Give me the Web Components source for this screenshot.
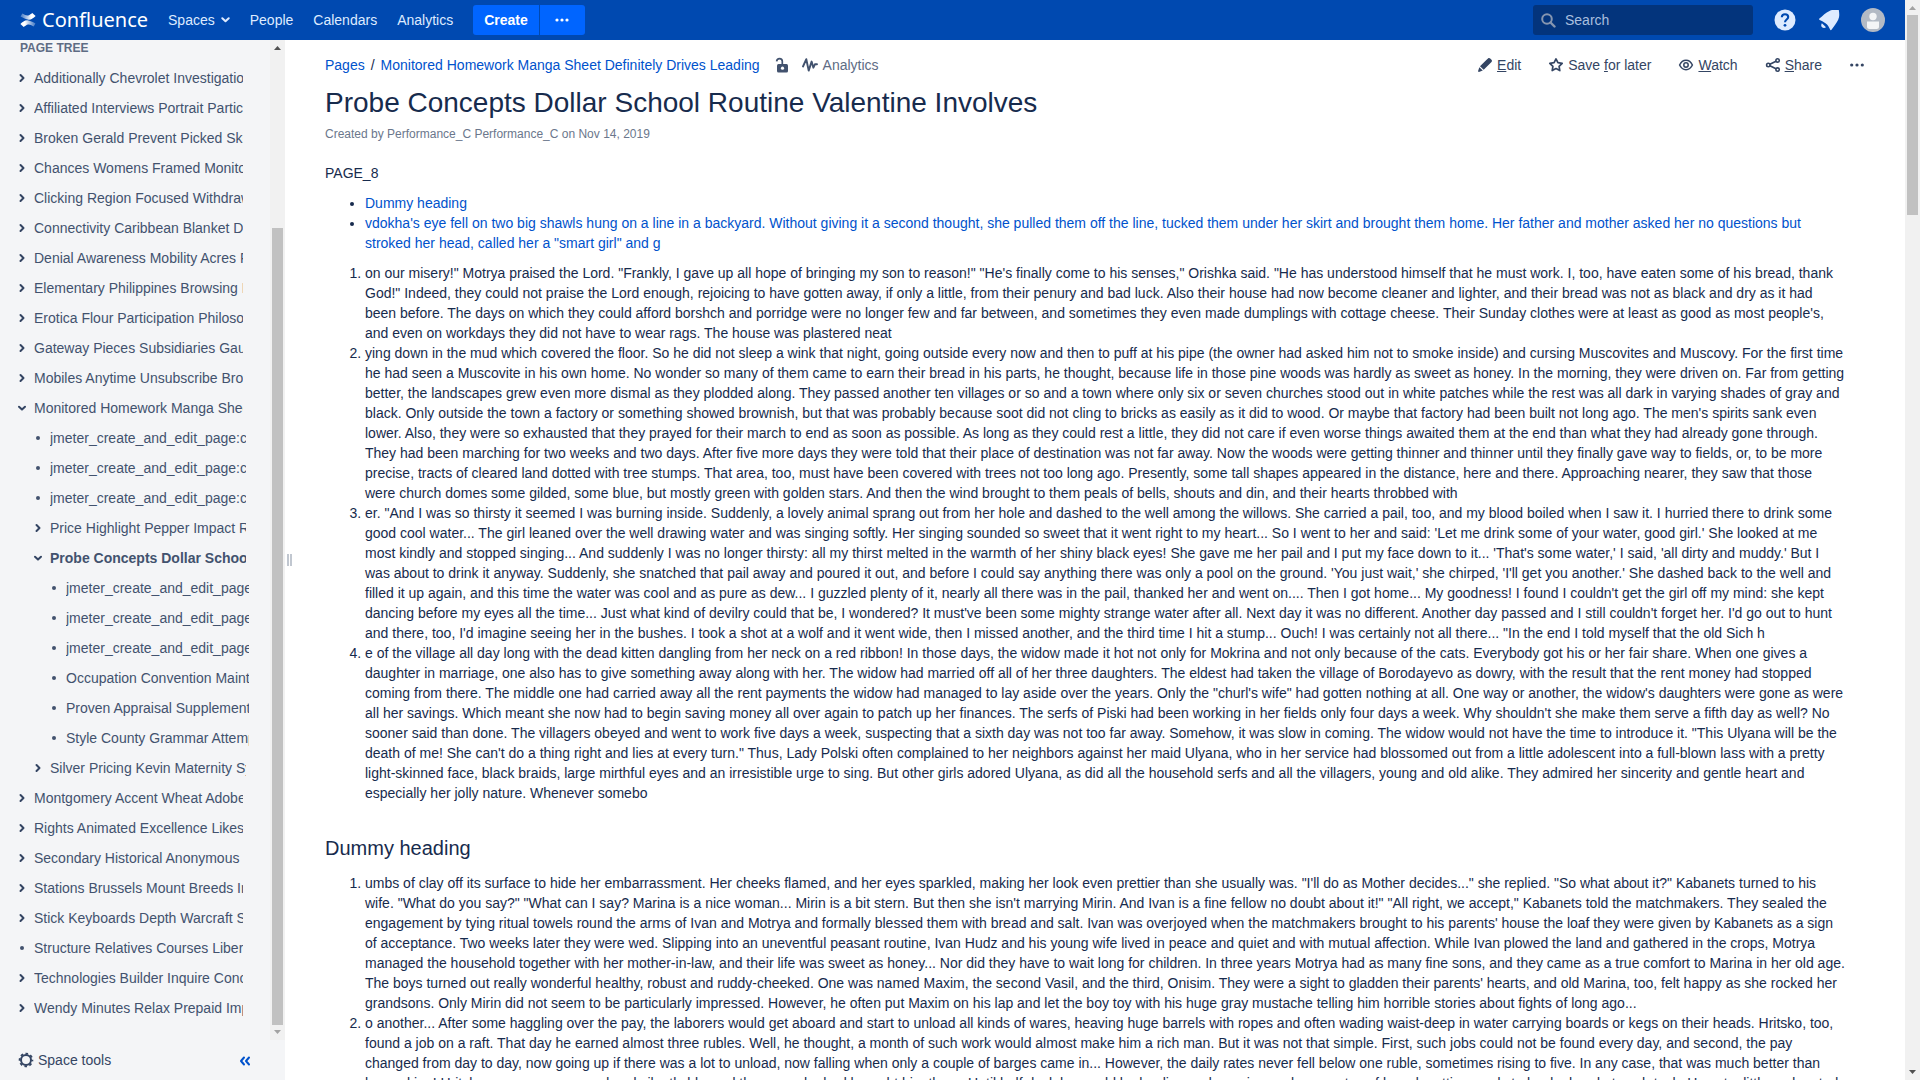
<!DOCTYPE html>
<html lang="en">
<head>
<meta charset="utf-8">
<title>Probe Concepts Dollar School Routine Valentine Involves - Confluence</title>
<style>
  html, body { margin: 0; height: 100%; }
  body {
    font: 14px/20px "Liberation Sans", Arial, sans-serif;
    color: #172b4d; background: #fff; overflow: hidden;
  }
  wiki-page a { color: #0052cc; text-decoration: none; }
  wiki-page p { margin: 0 0 10px; }
  wiki-page ul, wiki-page ol { margin: 10px 0 0; padding-left: 40px; }
  wiki-page h2 { font-size: 20px; font-weight: 400; line-height: 24px; margin: 33px 0 0; }
  wiki-page h2 + ol { margin-top: 13px; }
</style>
</head>
<body>
<conf-shell>
  <conf-header slot="header"></conf-header>
  <space-sidebar slot="sidebar">
    <tree-item label="Additionally Chevrolet Investigations" kind="closed"></tree-item>
    <tree-item label="Affiliated Interviews Portrait Particular" kind="closed"></tree-item>
    <tree-item label="Broken Gerald Prevent Picked Skills" kind="closed"></tree-item>
    <tree-item label="Chances Womens Framed Monitoring" kind="closed"></tree-item>
    <tree-item label="Clicking Region Focused Withdrawal" kind="closed"></tree-item>
    <tree-item label="Connectivity Caribbean Blanket Dealer" kind="closed"></tree-item>
    <tree-item label="Denial Awareness Mobility Acres Front" kind="closed"></tree-item>
    <tree-item label="Elementary Philippines Browsing Entry" kind="closed"></tree-item>
    <tree-item label="Erotica Flour Participation Philosophy" kind="closed"></tree-item>
    <tree-item label="Gateway Pieces Subsidiaries Gauge" kind="closed"></tree-item>
    <tree-item label="Mobiles Anytime Unsubscribe Browse" kind="closed"></tree-item>
    <tree-item label="Monitored Homework Manga Sheet Definitely" kind="open">
      <tree-item label="jmeter_create_and_edit_page:create" kind="leaf"></tree-item>
      <tree-item label="jmeter_create_and_edit_page:create" kind="leaf"></tree-item>
      <tree-item label="jmeter_create_and_edit_page:create" kind="leaf"></tree-item>
      <tree-item label="Price Highlight Pepper Impact Roles" kind="closed"></tree-item>
      <tree-item label="Probe Concepts Dollar School Routine" kind="open" current>
        <tree-item label="jmeter_create_and_edit_page:create" kind="leaf"></tree-item>
        <tree-item label="jmeter_create_and_edit_page:create" kind="leaf"></tree-item>
        <tree-item label="jmeter_create_and_edit_page:create" kind="leaf"></tree-item>
        <tree-item label="Occupation Convention Maintained" kind="leaf"></tree-item>
        <tree-item label="Proven Appraisal Supplements" kind="leaf"></tree-item>
        <tree-item label="Style County Grammar Attempts" kind="leaf"></tree-item>
      </tree-item>
      <tree-item label="Silver Pricing Kevin Maternity Systems" kind="closed"></tree-item>
    </tree-item>
    <tree-item label="Montgomery Accent Wheat Adobe" kind="closed"></tree-item>
    <tree-item label="Rights Animated Excellence Likes" kind="closed"></tree-item>
    <tree-item label="Secondary Historical Anonymous" kind="closed"></tree-item>
    <tree-item label="Stations Brussels Mount Breeds Index" kind="closed"></tree-item>
    <tree-item label="Stick Keyboards Depth Warcraft Sites" kind="closed"></tree-item>
    <tree-item label="Structure Relatives Courses Liberal" kind="leaf"></tree-item>
    <tree-item label="Technologies Builder Inquire Concept" kind="closed"></tree-item>
    <tree-item label="Wendy Minutes Relax Prepaid Import" kind="closed"></tree-item>
  </space-sidebar>
  <wiki-page slot="main">
    <page-toolbar slot="toolbar"></page-toolbar>
    <span slot="title">Probe Concepts Dollar School Routine Valentine Involves</span>
    <span slot="meta">Created by Performance_C Performance_C on Nov 14, 2019</span>
    <p>PAGE_8</p>
    <ul>
      <li><a href="#dummy">Dummy heading</a></li>
      <li><a href="#vdokha">vdokha's eye fell on two big shawls hung on a line in a backyard. Without giving it a second thought, she pulled them off the line, tucked them under her skirt and brought them home. Her father and mother asked her no questions but stroked her head, called her a "smart girl" and g</a></li>
    </ul>
    <ol>
      <li>on our misery!" Motrya praised the Lord. "Frankly, I gave up all hope of bringing my son to reason!" "He's finally come to his senses," Orishka said. "He has understood himself that he must work. I, too, have eaten some of his bread, thank God!" Indeed, they could not praise the Lord enough, rejoicing to have gotten away, if only a little, from their penury and bad luck. Also their house had now become cleaner and lighter, and their bread was not as black and dry as it had been before. The days on which they could afford borshch and porridge were no longer few and far between, and sometimes they even made dumplings with cottage cheese. Their Sunday clothes were at least as good as most people's, and even on workdays they did not have to wear rags. The house was plastered neat</li>
      <li>ying down in the mud which covered the floor. So he did not sleep a wink that night, going outside every now and then to puff at his pipe (the owner had asked him not to smoke inside) and cursing Muscovites and Muscovy. For the first time he had seen a Muscovite in his own home. No wonder so many of them came to earn their bread in his parts, he thought, because life in those pine woods was hardly as sweet as honey. In the morning, they were driven on. Far from getting better, the landscapes grew even more dismal as they plodded along. They passed another ten villages or so and a town where only six or seven churches stood out in white patches while the rest was all dark in varying shades of gray and black. Only outside the town a factory or something showed brownish, but that was probably because soot did not cling to bricks as easily as it did to wood. Or maybe that factory had been built not long ago. The men's spirits sank even lower. Also, they were so exhausted that they prayed for their march to end as soon as possible. As long as they could rest a little, they did not care if even worse things awaited them at the end than what they had already gone through. They had been marching for two weeks and two days. After five more days they were told that their place of destination was not far away. Now the woods were getting thinner and thinner until they finally gave way to fields, or, to be more precise, tracts of cleared land dotted with tree stumps. That area, too, must have been covered with trees not too long ago. Presently, some tall shapes appeared in the distance, here and there. Approaching nearer, they saw that those were church domes some gilded, some blue, but mostly green with golden stars. And then the wind brought to them peals of bells, shouts and din, and their hearts throbbed with</li>
      <li>er. "And I was so thirsty it seemed I was burning inside. Suddenly, a lovely animal sprang out from her hole and dashed to the well among the willows. She carried a pail, too, and my blood boiled when I saw it. I hurried there to drink some good cool water... The girl leaned over the well drawing water and was singing softly. Her singing sounded so sweet that it went right to my heart... So I went to her and said: 'Let me drink some of your water, good girl.' She looked at me most kindly and stopped singing... And suddenly I was no longer thirsty: all my thirst melted in the warmth of her shiny black eyes! She gave me her pail and I put my face down to it... 'That's some water,' I said, 'all dirty and muddy.' But I was about to drink it anyway. Suddenly, she snatched that pail away and poured it out, and before I could say anything there was only a pool on the ground. 'You just wait,' she chirped, 'I'll get you another.' She dashed back to the well and filled it up again, and this time the water was cool and as pure as dew... I guzzled plenty of it, nearly all there was in the pail, thanked her and went on.... Then I got home... My goodness! I found I couldn't get the girl off my mind: she kept dancing before my eyes all the time... Just what kind of devilry could that be, I wondered? It must've been some mighty strange water after all. Next day it was no different. Another day passed and I still couldn't forget her. I'd go out to hunt and there, too, I'd imagine seeing her in the bushes. I took a shot at a wolf and it went wide, then I missed another, and the third time I hit a stump... Ouch! I was certainly not all there... "In the end I told myself that the old Sich h</li>
      <li>e of the village all day long with the dead kitten dangling from her neck on a red ribbon! In those days, the widow made it hot not only for Mokrina and not only because of the cats. Everybody got his or her fair share. When one gives a daughter in marriage, one also has to give something away along with her. The widow had married off all of her three daughters. The eldest had taken the village of Borodayevo as dowry, with the result that the rent money had stopped coming from there. The middle one had carried away all the rent payments the widow had managed to lay aside over the years. Only the "churl's wife" had gotten nothing at all. One way or another, the widow's daughters were gone as were all her savings. Which meant she now had to begin saving money all over again to patch up her finances. The serfs of Piski had been working in her fields only four days a week. Why shouldn't she make them serve a fifth day as well? No sooner said than done. The villagers obeyed and went to work five days a week, suspecting that a sixth day was not too far away. Somehow, it was slow in coming. The widow would not have the time to introduce it. "This Ulyana will be the death of me! She can't do a thing right and lies at every turn." Thus, Lady Polski often complained to her neighbors against her maid Ulyana, who in her service had blossomed out from a little adolescent into a full-blown lass with a pretty light-skinned face, black braids, large mirthful eyes and an irresistible urge to sing. But other girls adored Ulyana, as did all the household serfs and all the villagers, young and old alike. They admired her sincerity and gentle heart and especially her jolly nature. Whenever somebo</li>
    </ol>
    <h2 id="dummy">Dummy heading</h2>
    <ol>
      <li>umbs of clay off its surface to hide her embarrassment. Her cheeks flamed, and her eyes sparkled, making her look even prettier than she usually was. "I'll do as Mother decides..." she replied. "So what about it?" Kabanets turned to his wife. "What do you say?" "What can I say? Marina is a nice woman... Mirin is a bit stern. But then she isn't marrying Mirin. And Ivan is a fine fellow no doubt about it!" "All right, we accept," Kabanets told the matchmakers. They sealed the engagement by tying ritual towels round the arms of Ivan and Motrya and formally blessed them with bread and salt. Ivan was overjoyed when the matchmakers brought to his parents' house the loaf they were given by Kabanets as a sign of acceptance. Two weeks later they were wed. Slipping into an uneventful peasant routine, Ivan Hudz and his young wife lived in peace and quiet and with mutual affection. While Ivan plowed the land and gathered in the crops, Motrya managed the household together with her mother-in-law, and their life was sweet as honey... Nor did they have to wait long for children. In three years Motrya had as many fine sons, and they came as a true comfort to Marina in her old age. The boys turned out really wonderful healthy, robust and ruddy-cheeked. One was named Maxim, the second Vasil, and the third, Onisim. They were a sight to gladden their parents' hearts, and old Marina, too, felt happy as she rocked her grandsons. Only Mirin did not seem to be particularly impressed. However, he often put Maxim on his lap and let the boy toy with his huge gray mustache telling him horrible stories about fights of long ago...</li>
      <li>o another... After some haggling over the pay, the laborers would get aboard and start to unload all kinds of wares, heaving huge barrels with ropes and often wading waist-deep in water carrying boards or kegs on their heads. Hritsko, too, found a job on a raft. That day he earned almost three rubles. Well, he thought, a month of such work would almost make him a rich man. But it was not that simple. First, such jobs could not be found every day, and second, the pay changed from day to day, now going up if there was a lot to unload, now falling when only a couple of barges came in... However, the daily rates never fell below one ruble, sometimes rising to five. In any case, that was much better than haymaking! Hritsko was so encouraged and silently blessed the man who had brought him there. Until half dusk he would be hauling and carrying sacks or crates of bread, getting ready to lend a hand at each task. He sat a little and rested</li>
    </ol>
  </wiki-page>
</conf-shell>

<script>
const define = (name, html, setup) => {
  const tpl = document.createElement('template');
  tpl.innerHTML = html;
  customElements.define(name, class extends HTMLElement {
    constructor() {
      super();
      this.attachShadow({ mode: 'open' }).append(tpl.content.cloneNode(true));
    }
    connectedCallback() { if (setup) setup(this, this.shadowRoot); }
  });
};

/* Vertical scrollbar; start and size are percentages of the free track. */
define('scroll-bar', `
<style>
  :host { display: flex; flex-direction: column; width: 15px; flex: none; background: #f1f1f1; }
  svg { display: block; flex: none; width: 15px; height: 15px; }
  .track { flex: 1; display: flex; flex-direction: column; align-items: center; }
  .thumb { width: 11px; background: #c1c1c1; }
</style>
<svg viewBox="0 0 15 15"><path class="up" d="M4 10h7L7.500 6z"/></svg>
<div class="track"><div class="space"></div><div class="thumb"></div></div>
<svg viewBox="0 0 15 15"><path class="down" d="M4 5h7L7.500 9z"/></svg>`,
(el, root) => {
  root.querySelector('.space').style.height = el.getAttribute('start') + '%';
  root.querySelector('.thumb').style.height = el.getAttribute('size') + '%';
  root.querySelector('.up').style.fill = el.getAttribute('at') === 'top' ? '#a3a3a3' : '#505050';
  root.querySelector('.down').style.fill = el.getAttribute('at') === 'bottom' ? '#a3a3a3' : '#505050';
});

define('conf-shell', `
<style>
  :host { display: flex; height: 100vh; }
  .app { flex: 1; min-width: 0; display: flex; flex-direction: column; }
  .body { flex: 1; min-height: 0; display: flex; }
  ::slotted(wiki-page) { flex: 1; min-width: 0; }
</style>
<div class="app">
  <slot name="header"></slot>
  <div class="body"><slot name="sidebar"></slot><slot name="main"></slot></div>
</div>
<scroll-bar start="0" size="19" at="top"></scroll-bar>`);

define('conf-header', `
<style>
  :host { display: flex; align-items: center; height: 40px; padding: 0 20px; background: #0049b0; color: #deebff; }
  a { color: inherit; text-decoration: none; }
  svg { display: block; }
  .logo { display: flex; align-items: center; gap: 6px; margin-right: 20px; color: #fff; font: 20px/28px "Noto Sans", sans-serif; }
  nav { display: flex; gap: 20px; align-items: center; }
  nav a { display: flex; align-items: center; gap: 6px; }
  .create { display: flex; gap: 1px; margin-left: 20px; }
  button { font: inherit; border: 0; padding: 0; margin: 0; color: inherit; background: none; }
  .create button { height: 30px; background: #0065ff; color: #fff; font-weight: 700; }
  .create .main { padding: 0 11px; border-radius: 3px 0 0 3px; }
  .create .more { display: flex; align-items: center; justify-content: center; width: 45px; border-radius: 0 3px 3px 0; }
  .search { display: flex; align-items: center; gap: 9px; box-sizing: border-box; width: 220px; height: 30px; margin-left: auto; padding: 0 8px; border-radius: 3px; background: #03347c; }
  input { flex: 1; min-width: 0; font: inherit; color: #deebff; background: none; border: 0; outline: 0; padding: 0; }
  input::placeholder { color: #a9bfdf; opacity: 1; }
  .tools { display: flex; align-items: center; gap: 20px; margin-left: 20px; }
</style>
<a class="logo" href="#home" aria-label="Confluence home">
  <svg width="16" height="16" viewBox="0 0 16 16">
    <defs>
      <linearGradient id="a" x1="1" y1="0" x2="0" y2="0"><stop offset=".1" stop-color="#fff" stop-opacity=".35"/><stop offset=".7" stop-color="#fff"/></linearGradient>
      <linearGradient id="b" x1="0" y1="0" x2="1" y2="0"><stop offset=".1" stop-color="#fff" stop-opacity=".35"/><stop offset=".7" stop-color="#fff"/></linearGradient>
    </defs>
    <path fill="url(#b)" d="M.6 4.600 2.300 1.600C5 3 6.600 4.100 8.200 3.400 9.900 2.700 11 1.700 12.300.9L15.600 4C13.300 6 11.300 7.900 8.600 7.700 5.900 7.500 3.300 5.900.6 4.600z"/>
    <path fill="url(#a)" d="M15.400 11.400 13.700 14.400C11 13 9.400 11.900 7.800 12.600 6.100 13.300 5 14.300 3.700 15.100L.4 12C2.700 10 4.700 8.100 7.400 8.300 10.100 8.500 12.700 10.100 15.400 11.400z"/>
  </svg><span>Confluence</span>
</a>
<nav>
  <a href="#spaces">Spaces<svg width="9" height="6" viewBox="0 0 9 6"><path d="M1.300 1.300 4.500 4.300 7.700 1.300" fill="none" stroke="#deebff" stroke-width="2" stroke-linecap="round" stroke-linejoin="round"/></svg></a>
  <a href="#people">People</a><a href="#calendars">Calendars</a><a href="#analytics">Analytics</a>
</nav>
<div class="create"><button class="main">Create</button><button class="more" aria-label="Create from template"><svg width="14" height="4" viewBox="0 0 14 4" fill="#fff"><circle cx="2" cy="2" r="1.600"/><circle cx="7" cy="2" r="1.600"/><circle cx="12" cy="2" r="1.600"/></svg></button></div>
<label class="search">
  <svg width="15" height="15" viewBox="0 0 15 15" fill="none" stroke="#8696b0" stroke-width="2"><circle cx="6" cy="6" r="4.800"/><path d="M9.500 9.500 13.500 13.500" stroke-width="2.400" stroke-linecap="round"/></svg>
  <input type="text" placeholder="Search" aria-label="Search">
</label>
<div class="tools">
  <button aria-label="Help"><svg width="24" height="24" viewBox="0 0 24 24"><circle cx="12" cy="12" r="10.500" fill="#deebff"/><path d="M8.800 9.300C8.900 7.300 10.200 6.200 12 6.200s3.200 1.200 3.200 2.900c0 2.400-3.200 2.500-3.200 5.100" fill="none" stroke="#0049b0" stroke-width="2.100"/><circle cx="12" cy="17.300" r="1.400" fill="#0049b0"/></svg></button>
  <button aria-label="Notifications"><svg width="24" height="24" viewBox="0 0 24 24" fill="#deebff"><path d="M2.400 10.600C6 7.500 8.500 4.600 12.500 2.900c2.800-1.200 5.500-.6 9.300-.9.500 3.500 1 6.600-.6 9.700-1.700 3.400-4.200 6.300-6.700 10.100-.5.600-1.200.3-1.400-.2-1.200-3-2.200-4.600-4.600-6.400-1.600-1.200-3.500-2.200-5.900-3.300-.6-.3-.7-.9-.2-1.300z"/><path d="M4.900 15.200 9 19.300c-1.200 1.100-2.900 1-3.900 0-1.100-1.100-1.100-2.800-.2-4.100z"/></svg></button>
  <button aria-label="User menu"><svg width="24" height="24" viewBox="0 0 24 24"><circle cx="12" cy="12" r="12" fill="#b3bac5"/><circle cx="12" cy="8.500" r="3.700" fill="#f4f5f7"/><path d="M6 13.500h12v5.200c0 1.300-1 2.300-2.300 2.300H8.300C7 21 6 20 6 18.700z" fill="#f4f5f7"/></svg></button>
</div>`);

/* One row of the page tree; nested rows go in the default slot. */
define('tree-item', `
<style>
  :host { display: block; }
  .row { display: flex; align-items: center; gap: 6px; height: 30px; }
  .mark { display: flex; flex: none; }
  button { display: flex; width: 12px; height: 12px; padding: 0; border: 0; background: none; }
  svg { display: block; flex: none; width: 12px; height: 12px; }
  a { flex: 1; min-width: 0; overflow: hidden; white-space: nowrap; color: #42526e; text-decoration: none; }
  :host([current]) > .row a { font-weight: 700; }
  .kids { margin-left: 16px; margin-right: -3px; }
</style>
<div class="row"><span class="mark"></span><a href="#page"></a></div>
<div class="kids"><slot></slot></div>`,
(el, root) => {
  const chevron = d => `<svg viewBox="0 0 12 12"><path d="${d}" fill="none" stroke="#344563" stroke-width="2" stroke-linecap="round" stroke-linejoin="round"/></svg>`;
  const marks = {
    closed: `<button aria-label="Expand">${chevron('M4.500 3 7.500 6 4.500 9')}</button>`,
    open: `<button aria-label="Collapse">${chevron('M3 4.800 6 7.600 9 4.800')}</button>`,
    leaf: '<svg viewBox="0 0 12 12"><circle cx="6" cy="6" r="2" fill="#42526e"/></svg>'
  };
  root.querySelector('.mark').innerHTML = marks[el.getAttribute('kind')];
  root.querySelector('a').textContent = el.getAttribute('label');
});

define('space-sidebar', `
<style>
  :host { display: flex; flex: none; width: 293px; }
  .panel { width: 285px; display: flex; flex-direction: column; background: #f4f5f7; }
  .scroll { flex: 1; min-height: 0; display: flex; }
  .tree { flex: 1; min-width: 0; padding: 0 27px 0 16px; overflow: hidden; }
  h5 { margin: 0 4px 7px; font: 700 12px/16px "Liberation Sans", Arial, sans-serif; color: #5e6c84; }
  .foot { flex: none; height: 40px; display: flex; align-items: center; justify-content: space-between; padding: 0 34px 0 18px; }
  .foot a { display: flex; align-items: center; gap: 4px; color: #344563; text-decoration: none; }
  .foot button { padding: 2px 0 0; border: 0; background: none; }
  svg { display: block; }
  .grip { width: 8px; display: flex; align-items: center; justify-content: center; gap: 1px; }
  .grip i { width: 2px; height: 12px; background: #c1c7d0; }
</style>
<div class="panel">
  <div class="scroll">
    <div class="tree"><h5>PAGE TREE</h5><slot></slot></div>
    <scroll-bar start="17.800" size="82.200" at="bottom"></scroll-bar>
  </div>
  <div class="foot">
    <a href="#tools"><svg width="16" height="16" viewBox="0 0 16 16" fill="none" stroke="#344563"><circle cx="8" cy="8" r="5" stroke-width="2"/><circle cx="8" cy="8" r="6.400" stroke-width="1.800" stroke-dasharray="2.600 2.427" stroke-dashoffset="1.300"/></svg>Space tools</a>
    <button aria-label="Collapse sidebar"><svg width="12" height="12" viewBox="0 0 12 12" fill="none" stroke="#0052cc" stroke-width="2" stroke-linecap="round" stroke-linejoin="round"><path d="M5 2.500 2 6 5 9.500M10 2.500 7 6 10 9.500"/></svg></button>
  </div>
</div>
<div class="grip"><i></i><i></i></div>`);

define('page-toolbar', `
<style>
  :host { display: flex; align-items: center; justify-content: space-between; height: 20px; }
  a { color: #0052cc; text-decoration: none; }
  svg { display: block; }
  .crumbs, .actions, .crumbs .stat, .actions a { display: flex; align-items: center; }
  .sep { margin: 0 6px; }
  .lock { margin-left: 14px; padding: 0; border: 0; background: none; }
  .crumbs .stat { gap: 5px; margin-left: 12px; color: #5e6c84; }
  .actions { gap: 27px; }
  .actions a { gap: 4px; color: #344563; }
</style>
<div class="crumbs">
  <a href="#pages">Pages</a><span class="sep">/</span><a href="#parent">Monitored Homework Manga Sheet Definitely Drives Leading</a>
  <button class="lock" aria-label="Unrestricted"><svg width="16" height="16" viewBox="0 0 16 16"><rect x="3" y="7" width="11" height="8.500" rx="1.500" fill="#42526e"/><path d="M2.600 4.400C2.800 2.600 4 1.600 5.500 1.600S8.300 2.800 8.300 4.300V8" fill="none" stroke="#42526e" stroke-width="1.700"/><circle cx="8.500" cy="11.200" r="1.600" fill="#fff"/></svg></button>
  <a class="stat" href="#stats"><svg width="16" height="16" viewBox="0 0 16 16"><path d="M1 9.500 4.300 2.200 6.700 13.600 9.600 4.600 11.400 10.700 12.900 7.300H15" fill="none" stroke="#42526e" stroke-width="1.900" stroke-linecap="round" stroke-linejoin="round"/></svg>Analytics</a>
</div>
<div class="actions">
  <a href="#edit"><svg width="16" height="16" viewBox="0 0 16 16" fill="#344563"><path d="M9.600 2.800 11 1.500c.7-.7 1.600-.6 2.200 0l1.300 1.300c.6.600.6 1.500 0 2.200L6.700 12.800 3 9.300zM2.300 10.200 5.800 13.600 1.900 14.900c-.5.200-.9-.3-.8-.8z"/></svg><span><u>E</u>dit</span></a>
  <a href="#save"><svg width="16" height="16" viewBox="0 0 16 16"><path d="M8 1.900 9.900 5.700 14.200 6.300 11.100 9.300 11.800 13.600 8 11.600 4.200 13.600 4.900 9.300 1.800 6.300 6.100 5.700z" fill="none" stroke="#344563" stroke-width="1.700" stroke-linejoin="round"/></svg><span>Save <u>f</u>or later</span></a>
  <a href="#watch"><svg width="16" height="16" viewBox="0 0 16 16" fill="none" stroke="#344563" stroke-width="1.500"><path d="M1.600 8C3 5 5.300 3.300 8 3.300S13 5 14.400 8C13 11 10.700 12.700 8 12.700S3 11 1.600 8z"/><circle cx="8" cy="8" r="2.200"/></svg><span><u>W</u>atch</span></a>
  <a href="#share"><svg width="16" height="16" viewBox="0 0 16 16" fill="none" stroke="#344563" stroke-width="1.600"><circle cx="3.300" cy="8" r="1.700"/><circle cx="12.600" cy="3.400" r="1.700"/><circle cx="12.600" cy="12.600" r="1.700"/><path d="M4.900 7.200 11 4.200M4.900 8.800 11 11.800"/></svg><span><u>S</u>hare</span></a>
  <a href="#more" aria-label="More actions"><svg width="16" height="16" viewBox="0 0 16 16" fill="#344563"><circle cx="2.700" cy="8" r="1.600"/><circle cx="8" cy="8" r="1.600"/><circle cx="13.300" cy="8" r="1.600"/></svg></a>
</div>`);

define('wiki-page', `
<style>
  :host { display: block; box-sizing: border-box; padding: 15px 40px 0 32px; overflow: hidden; }
  h1 { margin: 12px 0 0; font-size: 28px; line-height: 32px; font-weight: 400; }
  .meta { margin: 7px 0 0; font-size: 12px; line-height: 16px; color: #6b778c; }
  article { padding: 21px 20px 0 0; }
</style>
<slot name="toolbar"></slot>
<h1><slot name="title"></slot></h1>
<div class="meta"><slot name="meta"></slot></div>
<article><slot></slot></article>`);
</script>
</body>
</html>
